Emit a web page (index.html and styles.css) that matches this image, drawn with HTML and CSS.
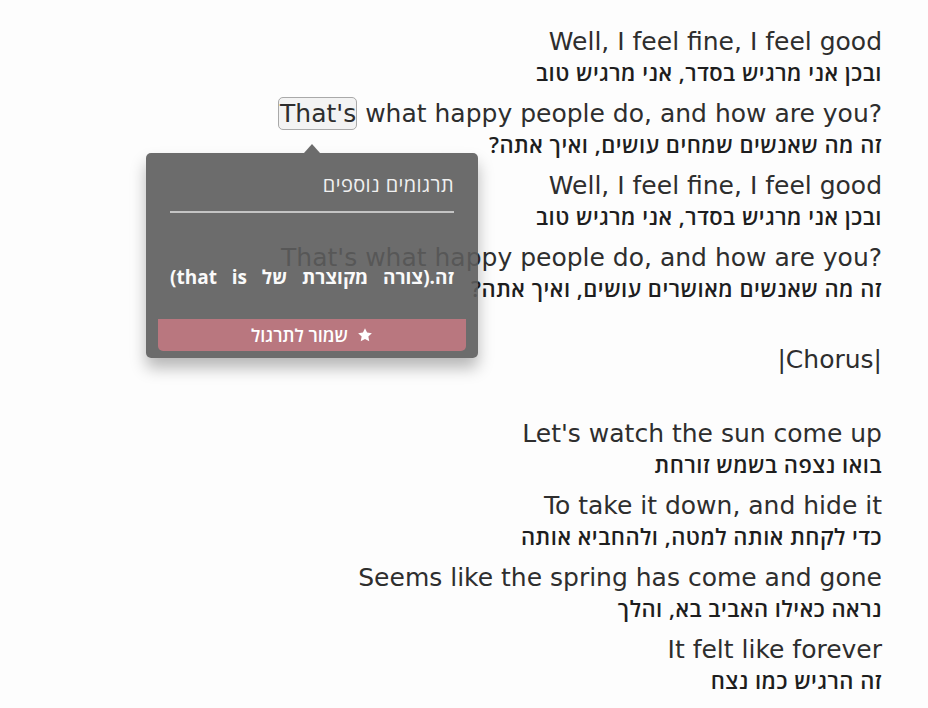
FILE: index.html
```html
<!DOCTYPE html>
<html lang="he">
<head>
<meta charset="utf-8">
<title>Lyrics</title>
<link rel="stylesheet" href="styles.css">
</head>
<body>
<main class="lyrics">
  <div class="verse">
    <div class="en">Well, I feel fine, I feel good</div>
    <div class="he" dir="rtl">ובכן אני מרגיש בסדר, אני מרגיש טוב</div>
  </div>
  <div class="verse">
    <div class="en"><span class="word selected">That's</span> what happy people do, and how are you?</div>
    <div class="he" dir="rtl">זה מה שאנשים שמחים עושים, ואיך אתה?</div>
  </div>
  <div class="verse">
    <div class="en">Well, I feel fine, I feel good</div>
    <div class="he" dir="rtl">ובכן אני מרגיש בסדר, אני מרגיש טוב</div>
  </div>
  <div class="verse">
    <div class="en">That's what happy people do, and how are you?</div>
    <div class="he" dir="rtl">זה מה שאנשים מאושרים עושים, ואיך אתה?</div>
  </div>
  <div class="en chorus">|Chorus|</div>
  <div class="verse">
    <div class="en">Let's watch the sun come up</div>
    <div class="he" dir="rtl">בואו נצפה בשמש זורחת</div>
  </div>
  <div class="verse">
    <div class="en">To take it down, and hide it</div>
    <div class="he" dir="rtl">כדי לקחת אותה למטה, ולהחביא אותה</div>
  </div>
  <div class="verse">
    <div class="en">Seems like the spring has come and gone</div>
    <div class="he" dir="rtl">נראה כאילו האביב בא, והלך</div>
  </div>
  <div class="verse">
    <div class="en">It felt like forever</div>
    <div class="he" dir="rtl">זה הרגיש כמו נצח</div>
  </div>

  <div class="popup" dir="rtl">
    <div class="popup-title">תרגומים נוספים</div>
    <div class="popup-divider"></div>
    <div class="popup-translation">זה.(צורה מקוצרת של that is)</div>
    <button class="save-btn" type="button">
      <svg class="star" viewBox="0 0 24 24" width="16" height="16" aria-hidden="true"><path d="M12 1.8l3.1 6.6 7.2.9-5.3 5 1.4 7.1L12 17.9l-6.4 3.5 1.4-7.1-5.3-5 7.2-.9z" fill="#fff"/></svg>
      <span>שמור לתרגול</span>
    </button>
  </div>
</main>
</body>
</html>
```

FILE: styles.css
```css
html, body {
  margin: 0;
  padding: 0;
  background: #fdfdfd;
}

.lyrics {
  position: relative;
  padding: 27px 46px 0 0;
  text-align: right;
  color: #222;
}

.verse {
  margin-bottom: 12px;
}

.en {
  font-family: "DejaVu Sans", "Open Sans", sans-serif;
  font-weight: 400;
  font-size: 25px;
  line-height: 30px;
  color: #2e2e2e;
  white-space: nowrap;
}

.he {
  font-family: "Open Sans", "Noto Sans Hebrew", "DejaVu Sans", sans-serif;
  font-weight: 600;
  font-size: 22px;
  letter-spacing: 0.5px;
  line-height: 30px;
  color: #1e1e1e;
  text-align: right;
  white-space: nowrap;
}

.chorus {
  margin: 42px 0 44px;
}

.word.selected {
  background: #f3f3f3;
  border: 1px solid #a9a9a9;
  border-radius: 5px;
  padding: 1px 0 1px 1px;
}

.popup {
  position: absolute;
  left: 146px;
  top: 153px;
  width: 332px;
  height: 205px;
  box-sizing: border-box;
  padding: 20px 12px 7px;
  background: rgba(92, 92, 92, 0.9);
  border-radius: 5px;
  box-shadow: 0 10px 16px rgba(0, 0, 0, 0.28);
  display: flex;
  flex-direction: column;
  font-family: "Open Sans", "Noto Sans Hebrew", "DejaVu Sans", sans-serif;
  color: #f2f2f2;
}

.popup::before {
  content: "";
  position: absolute;
  top: -9px;
  left: 158px;
  border-left: 8px solid transparent;
  border-right: 8px solid transparent;
  border-bottom: 9px solid rgba(92, 92, 92, 0.9);
}

.popup-title {
  margin: 0 12px;
  font-size: 20px;
  font-weight: 500;
  letter-spacing: 0.4px;
  line-height: 24px;
  text-align: right;
  color: #f0f0f0;
}

.popup-divider {
  margin: 14px 12px 0;
  height: 2px;
  background: #c4c4c4;
}

.popup-translation {
  margin: 52px 12px 0;
  font-size: 19px;
  font-weight: 700;
  line-height: 24px;
  color: #fafafa;
  text-align: justify;
  text-align-last: justify;
}

.save-btn {
  margin-top: auto;
  height: 32px;
  border: 0;
  border-radius: 0 0 5px 5px;
  background: #b9777f;
  color: #fff;
  font-family: inherit;
  font-size: 18px;
  font-weight: 600;
  display: flex;
  align-items: center;
  justify-content: center;
  gap: 9px;
  padding: 0;
  cursor: pointer;
}

.star {
  display: block;
}
```
